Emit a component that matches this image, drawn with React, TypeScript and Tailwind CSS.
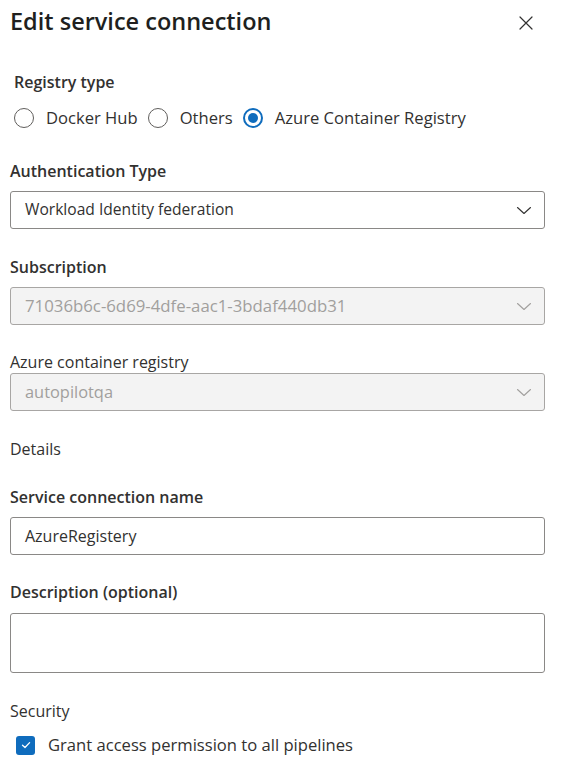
import React from "react";

function Chevron({ muted }: { muted?: boolean }) {
  return (
    <svg width="16" height="16" viewBox="0 0 16 16" fill="none">
      <path
        d="M1.5 5.5L8 11.5L14.5 5.5"
        stroke={muted ? "#a19f9d" : "#323130"}
        strokeWidth="1.1"
        strokeLinecap="round"
        strokeLinejoin="round"
      />
    </svg>
  );
}

function Radio({ checked, label }: { checked?: boolean; label: string }) {
  return (
    <label className="flex items-center">
      {checked ? (
        <span className="flex h-[20px] w-[20px] items-center justify-center rounded-full border-2 border-[#0f6cbd]">
          <span className="h-[10px] w-[10px] rounded-full bg-[#0f6cbd]" />
        </span>
      ) : (
        <span className="h-[20px] w-[20px] rounded-full border border-[#605e5c]" />
      )}
      <span className="ml-[12px] text-[16.6px] leading-[24px] text-[#323130]">{label}</span>
    </label>
  );
}

function Select({ value, disabled, size }: { value: string; disabled?: boolean; size: string }) {
  return (
    <div
      className={
        disabled
          ? "flex h-[38px] items-center justify-between rounded-[3px] border border-[#a8a6a4] bg-[#f3f3f3] pl-[14px] pr-[12px]"
          : "flex h-[38px] items-center justify-between rounded-[3px] border border-[#8a8886] bg-white pl-[14px] pr-[12px]"
      }
    >
      <span className={size + (disabled ? " text-[#a19f9d]" : " text-[#323130]")}>{value}</span>
      <Chevron muted={disabled} />
    </div>
  );
}

export default function App() {
  return (
    <div
      className="min-h-screen w-full bg-white pl-[10px] pr-[23px] text-[#323130]"
      style={{ fontFamily: '"Open Sans", "Noto Sans", sans-serif' }}
    >
      <div className="flex items-start justify-between pt-[4px]">
        <h1 className="text-[23.5px] font-semibold leading-[34px] text-[#201f1e]">Edit service connection</h1>
        <button type="button" className="mr-[9px] mt-[9px] p-[2px]">
          <svg width="16" height="16" viewBox="0 0 16 16" fill="none">
            <path d="M2 2L14 14M14 2L2 14" stroke="#323130" strokeWidth="1.2" strokeLinecap="round" />
          </svg>
        </button>
      </div>

      <div className="ml-[4px] mt-[32px] text-[16px] font-semibold leading-[24px]">Registry type</div>
      <div className="ml-[4px] mt-[12px] flex items-center gap-[10px]">
        <Radio label="Docker Hub" />
        <Radio label="Others" />
        <Radio checked label="Azure Container Registry" />
      </div>

      <div className="mt-[29px] text-[16px] font-semibold leading-[24px]">Authentication Type</div>
      <div className="mt-[8px]">
        <Select size="text-[15.6px]" value="Workload Identity federation" />
      </div>

      <div className="mt-[26px] text-[16px] font-semibold leading-[24px]">Subscription</div>
      <div className="mt-[8px]">
        <Select size="text-[16.8px]" disabled value="71036b6c-6d69-4dfe-aac1-3bdaf440db31" />
      </div>

      <div className="mt-[26px] text-[16px] leading-[22px]">Azure container registry</div>
      <div>
        <Select size="text-[16.4px]" disabled value="autopilotqa" />
      </div>

      <div className="mt-[26px] text-[16px] leading-[24px]">Details</div>

      <div className="mt-[24px] text-[16px] font-semibold leading-[24px]">Service connection name</div>
      <div className="mt-[8px] flex h-[38px] items-center rounded-[3px] border border-[#8a8886] pl-[14px]">
        <span className="text-[16px]">AzureRegistery</span>
      </div>

      <div className="mt-[25px] text-[16px] font-semibold leading-[24px]">Description (optional)</div>
      <div className="mt-[9px] h-[60px] rounded-[3px] border border-[#8a8886]" />

      <div className="mt-[26px] text-[16px] leading-[24px]">Security</div>
      <label className="ml-[6px] mt-[10px] flex items-center">
        <span className="flex h-[19px] w-[19px] items-center justify-center rounded-[3px] bg-[#0f6cbd]">
          <svg width="12" height="12" viewBox="0 0 12 12" fill="none">
            <path d="M2.5 6.2L5 8.5L9.6 3.6" stroke="white" strokeWidth="1.3" strokeLinecap="round" strokeLinejoin="round" />
          </svg>
        </span>
        <span className="ml-[13px] text-[16.6px] leading-[24px]">Grant access permission to all pipelines</span>
      </label>
    </div>
  );
}
